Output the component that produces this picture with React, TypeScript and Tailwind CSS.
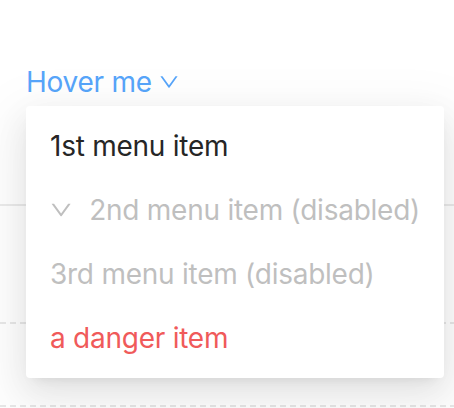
import React from "react";

const Down = ({ className }: { className?: string }) => (
  <svg viewBox="64 64 896 896" className={className} fill="currentColor" aria-hidden>
    <path d="M884 256h-75c-5.1 0-9.9 2.5-12.9 7L512 654.2 227.9 263c-3-4.5-7.8-7-12.9-7h-75c-6.5 0-10.3 7.4-6.5 12.7l352.6 486.1c12.8 17.6 39 17.6 51.7 0l352.6-486.1c3.9-5.3.1-12.7-6.4-12.7z" />
  </svg>
);

export default function App() {
  return (
    <div
      className="relative w-[454px] h-[408px] overflow-hidden bg-white tracking-[-0.25px]"
      style={{ fontFamily: 'Inter, "Noto Sans", "Liberation Sans", sans-serif' }}
    >
      <div className="flex flex-col">
        <div className="pt-[60px] pl-[26px] flex items-center text-[28px] leading-[44px] text-[#57a5fa]">
          <span>Hover me</span>
          <Down className="w-[20px] h-[20px] ml-[7px]" />
        </div>
        <div className="mt-[100px] h-[2px] bg-[#ebebeb]" />
        <div className="mt-[116px] h-[2px] bg-[repeating-linear-gradient(90deg,#e8e8e8_0_6px,transparent_6px_10px)]" />
        <div className="mt-[81px] h-[2px] bg-[repeating-linear-gradient(90deg,#e8e8e8_0_6px,transparent_6px_10px)]" />
      </div>

      <div className="absolute left-[26px] top-[106px] w-[418px] py-[8px] bg-white rounded-[4px] shadow-[0_6px_12px_-8px_rgba(0,0,0,0.12),0_12px_32px_0_rgba(0,0,0,0.08),0_18px_56px_16px_rgba(0,0,0,0.05)] text-[28px] leading-[44px] whitespace-nowrap">
        <div className="px-[24px] py-[10px] text-[#262626]">1st menu item</div>
        <div className="px-[24px] py-[10px] text-[#bfbfbf] flex items-center">
          <Down className="w-[24px] h-[24px] mr-[17px]" />
          <span>2nd menu item (disabled)</span>
        </div>
        <div className="px-[24px] py-[10px] text-[#bfbfbf]">3rd menu item (disabled)</div>
        <div className="px-[24px] py-[10px] text-[#f05a5a]">a danger item</div>
      </div>
    </div>
  );
}
